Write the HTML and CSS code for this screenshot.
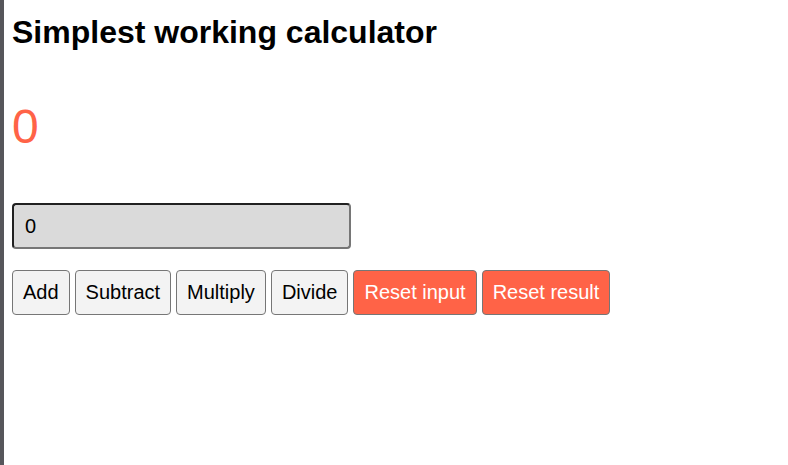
FILE: index.html
```html
<!DOCTYPE html>
<html lang="en">
<head>
<meta charset="utf-8">
<title>Simplest working calculator</title>
<link rel="stylesheet" href="styles.css">
</head>
<body>
<main class="app">
  <h1 class="title">Simplest working calculator</h1>
  <p class="result">0</p>
  <form class="calc" onsubmit="return false">
    <input class="calc-input" type="number" value="0" aria-label="Number">
    <div class="actions">
      <button class="btn" type="button">Add</button>
      <button class="btn" type="button">Subtract</button>
      <button class="btn" type="button">Multiply</button>
      <button class="btn" type="button">Divide</button>
      <button class="btn btn-reset" type="button">Reset input</button>
      <button class="btn btn-reset" type="button">Reset result</button>
    </div>
  </form>
</main>
</body>
</html>
```
FILE: styles.css
```css
html {
  border-left: 4px solid #56565b;
  min-height: 100%;
  box-sizing: border-box;
  background: #fff;
}
body {
  margin: 0;
  padding: 14px 8px 8px;
  font-family: "Liberation Sans", Arial, sans-serif;
  color: #000;
}
.title {
  margin: 0;
  font-size: 32px;
  font-weight: bold;
  line-height: 37px;
}
.result {
  margin: 48px 0 0;
  font-size: 48px;
  line-height: 55px;
  color: #ff6347;
}
.calc {
  margin-top: 49px;
  display: flex;
  flex-direction: column;
  gap: 21px;
}
.calc-input {
  width: 339px;
  height: 46px;
  box-sizing: border-box;
  padding: 0 11px;
  margin: 0;
  font-family: "Liberation Sans", Arial, sans-serif;
  font-size: 20px;
  color: #000;
  background: #dadada;
  border: 2px inset #767676;
  border-radius: 4px;
  -moz-appearance: textfield;
}
.calc-input::-webkit-outer-spin-button,
.calc-input::-webkit-inner-spin-button {
  -webkit-appearance: none;
  margin: 0;
}
.actions {
  display: flex;
  gap: 5px;
}
.btn {
  height: 45px;
  box-sizing: border-box;
  padding: 0 10px;
  margin: 0;
  font-family: "Liberation Sans", Arial, sans-serif;
  font-size: 20px;
  color: #000;
  background: #f3f3f3;
  border: 1px solid #767676;
  border-radius: 4px;
}
.btn-reset {
  background: #ff6347;
  color: #fff;
}
```
